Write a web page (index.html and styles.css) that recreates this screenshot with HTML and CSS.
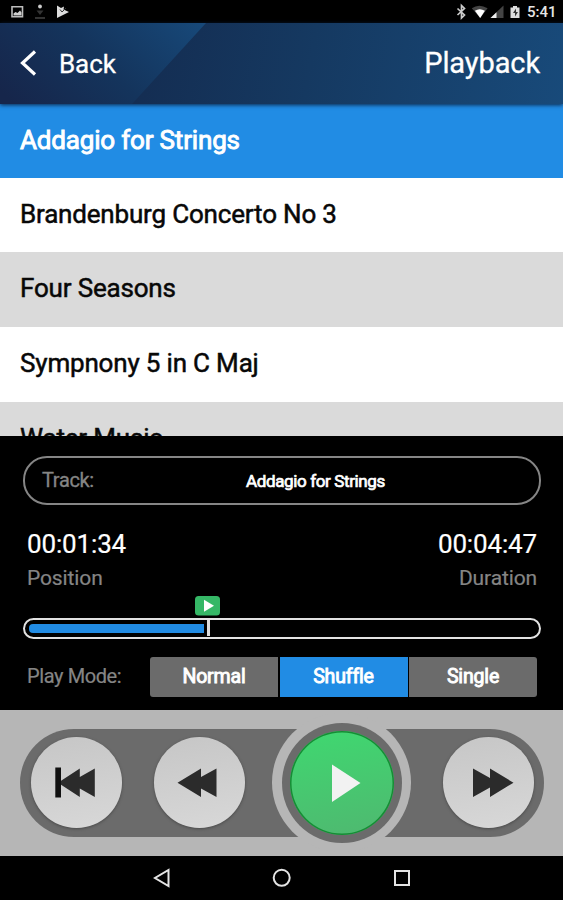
FILE: index.html
```html
<!DOCTYPE html>
<html lang="en">
<head>
<meta charset="utf-8">
<title>Playback</title>
<link rel="stylesheet" href="styles.css">
</head>
<body>
<div class="status">
  <svg class="status-left" width="80" height="23" viewBox="0 0 80 23">
    <path d="M12 6.800h10.500v10h-10.500z" fill="none" stroke="#bdbdbd" stroke-width="1.600"/>
    <path d="M13.500 15.500v-2l2-1.500 2 1 2.500-2.500 1.500 2v3z" fill="#d0d0d0"/>
    <circle cx="40" cy="6.500" r="1.900" fill="#ccc"/>
    <path d="M36.500 10.500h7L40 15zM35 17h10v2H35z" fill="#333"/>
    <path d="M57 5.500l4 2.500 3-1.500-.5 3 5.500 2.500-12 6z" fill="#ddd"/>
    <path d="M60 9.500l2 2.500 4-4" fill="none" stroke="#333" stroke-width="1"/>
  </svg>
  <div class="status-right">
    <svg width="70" height="23" viewBox="0 0 70 23">
      <path d="M2.500 8.500l7 6.500-3 3V5.500l3 3-7 6.500" fill="none" stroke="#ccc" stroke-width="1.700"/>
      <path d="M16.800 8.200q7.200-5 15.800 0L25.200 18z" fill="#444"/>
      <path d="M19.900 10.800q4.700-3 10 0L25.200 18z" fill="#fff"/>
      <path d="M48.500 5.500V18H35.500z" fill="#444"/>
      <path d="M41.500 12.300V18h-6z" fill="#eee"/>
      <path d="M55.500 7.500h2.500v-1.500h4v1.500h2.500V18h-9z" fill="#ddd"/>
      <path d="M61 8.500l-3 4.500h2v3.500l3-4.500h-2z" fill="#333"/>
    </svg>
    <span class="clock">5:41</span>
  </div>
</div>
<header class="header">
  <div class="back">
    <svg width="20" height="30" viewBox="0 0 20 30"><path d="M17 3.500L4.500 15l12.500 11.500" fill="none" stroke="#fff" stroke-width="3.200"/></svg>
    <span class="back-label">Back</span>
  </div>
  <span class="title">Playback</span>
</header>
<main class="tracks">
  <div class="track selected"><span>Addagio for Strings</span></div>
  <div class="track"><span>Brandenburg Concerto No 3</span></div>
  <div class="track alt"><span>Four Seasons</span></div>
  <div class="track"><span>Sympnony 5 in C Maj</span></div>
  <div class="track alt"><span>Water Music</span></div>
</main>
<section class="player">
  <div class="now">
    <span class="now-label">Track:</span>
    <span class="now-name">Addagio for Strings</span>
  </div>
  <div class="times">
    <div><div class="time">00:01:34</div><div class="caption">Position</div></div>
    <div class="right"><div class="time">00:04:47</div><div class="caption">Duration</div></div>
  </div>
  <div class="progress">
    <svg class="marker" width="25" height="20" viewBox="0 0 25 20"><rect width="25" height="19.500" rx="3.500" fill="#35b766"/><path d="M9 3.800L19 9.800 9 15.800z" fill="#fff"/></svg>
    <div class="bar"><div class="fill"></div><div class="tick"></div></div>
  </div>
  <div class="modes">
    <span class="mode-label">Play Mode:</span>
    <div class="mode first"><span>Normal</span></div>
    <div class="mode active"><span>Shuffle</span></div>
    <div class="mode last"><span>Single</span></div>
  </div>
</section>
<section class="controls">
  <div class="deck">
    <div class="btn">
      <svg width="91" height="91" viewBox="0 0 91 91"><path d="M48.800 31.500v8.500L63.800 31.500v28.500L48.800 51.500v8.500L27 45.700z" fill="#2b2b2b"/><path d="M24.300 30.500h5.700v30h-5.700z" fill="#111"/></svg>
    </div>
    <div class="btn rewind">
      <svg width="91" height="91" viewBox="0 0 91 91"><path d="M47 31.500v8.500L62.500 31.500v28.500L47 51.500v8.500L23.500 45.700z" fill="#2b2b2b"/></svg>
    </div>
    <div class="play-halo"><div class="play-ring"><div class="play">
      <svg width="104" height="104" viewBox="0 0 104 104"><path d="M42 33.500L70.500 52 42 71z" fill="#f2f2f2"/></svg>
    </div></div></div>
    <div class="btn forward">
      <svg width="91" height="91" viewBox="0 0 91 91"><path d="M30 31.500v28.500L47 50.500v9.500L70.500 45.700 47 31.500v9.500z" fill="#2b2b2b"/></svg>
    </div>
  </div>
</section>
<nav class="nav">
  <svg width="563" height="44" viewBox="0 0 563 44" fill="none" stroke="#e4e4e4" stroke-width="2">
    <path d="M168.500 14v16L155 22z"/><circle cx="281.700" cy="21.800" r="8"/><path d="M395 15h14v14h-14z"/>
  </svg>
</nav>
</body>
</html>
```
FILE: styles.css
```css
* { box-sizing: border-box; }
body { margin: 0; width: 563px; height: 900px; overflow: hidden; background: #000; font-family: Roboto, sans-serif; color: #fff; }
svg { display: block; }
span { white-space: nowrap; }
.status { height: 23px; display: flex; justify-content: space-between; background: #000; }
.status-right { display: flex; padding-right: 8px; }
.clock { font-size: 15px; line-height: 25px; font-weight: 500; width: 28px; margin-left: 2px; color: #e6e6e6; }
.header {
  height: 81px; display: flex; justify-content: space-between; padding: 0 23px 0 18px; line-height: 79px;
  background: linear-gradient(100deg, #142d52 25%, #153961 55%, #184a7a 100%);
  position: relative; z-index: 1; box-shadow: 0 1px 4px #0b2547;
}
.header::before {
  content: ""; position: absolute; inset: 0; z-index: -1;
  clip-path: polygon(0 0, 206px 0, 132px 100%, 0 100%);
  background: linear-gradient(45deg, #16264b 5%, #14345c 50%, #17497a 100%);
  width: 206px;
}
.back { display: flex; align-items: center; gap: 21px; }
.back svg { margin-top: -2px; }
.back-label { font-size: 26px; letter-spacing: -.1px; -webkit-text-stroke: .3px #fff; padding-top: 1px; }
.title { font-size: 29px; letter-spacing: -.1px; padding-top: 1px; -webkit-text-stroke: .3px #fff; }
.tracks { height: 332px; overflow: hidden; background: #fff; color: #080808; }
.track { height: 74.700px; padding-left: 20px; font-size: 26px; letter-spacing: -.18px; line-height: 73px; background: #fff; -webkit-text-stroke: .5px currentColor; }
.track.selected { height: 73.600px; line-height: 72px; background: #218ce4; color: #fff; -webkit-text-stroke-width: .9px; }
.track.alt { background: #dadada; }
.player { height: 274px; padding: 20px 22px 0 23px; background: #000; }
.now { display: flex; align-items: center; height: 48.500px; border: 2px solid #858585; border-radius: 24px; padding-left: 17px; }
.now-label { font-size: 20px; letter-spacing: -.35px; color: #858585; width: 204px; -webkit-text-stroke: .3px #858585; }
.now-name { font-size: 17px; letter-spacing: -.37px; -webkit-text-stroke: .7px #fff; padding-top: 2px; }
.times { display: flex; justify-content: space-between; padding: 23px 4px 0; }
.right { text-align: right; }
.time { font-size: 26px; letter-spacing: -.15px; line-height: 32px; -webkit-text-stroke: .2px #fff; }
.caption { font-size: 21px; letter-spacing: -.12px; line-height: 24px; margin-top: 6px; color: #858585; -webkit-text-stroke: .2px #858585; }
.progress { padding-top: 6.500px; }
.marker { margin-left: 172px; }
.bar { height: 20.500px; margin-top: 2px; border: 2.500px solid #e2e2e2; border-radius: 10.500px; display: flex; align-items: center; padding-left: 4px; }
.fill { width: 175px; height: 9px; background: #218ce4; border-radius: 4px 0 0 4px; }
.tick { width: 2.500px; height: 16px; margin-left: 3px; background: #ddd; }
.modes { display: flex; height: 40px; margin-top: 18px; padding-left: 4px; line-height: 39px; }
.mode-label { width: 123px; font-size: 20px; letter-spacing: -.4px; color: #858585; -webkit-text-stroke: .2px #858585; }
.mode { width: 128px; margin-right: 1.500px; background: #6b6b6b; text-align: center; font-size: 19.500px; letter-spacing: -.15px; -webkit-text-stroke: .9px #fff; }
.mode.active { background: #218ce4; }
.first { border-radius: 3px 0 0 3px; }
.last { border-radius: 0 3px 3px 0; }
.controls { height: 146px; background: #b6b6b6; padding: 18.500px 19px 0 20px; }
.deck { height: 108.500px; background: #6b6b6b; border-radius: 55px; display: flex; align-items: center; padding-left: 10.500px; }
.btn { width: 91px; height: 91px; flex: none; border-radius: 50%; background: linear-gradient(170deg, #c6c6c6, #d8d8d8); box-shadow: 0 1px 3px #4a4a4a; }
.rewind { margin-left: 32.500px; }
.play-halo { width: 139px; height: 139px; flex: none; margin-left: 27px; border-radius: 50%; background: #b6b6b6; display: grid; place-items: center; }
.play-ring { width: 120px; height: 120px; border-radius: 50%; background: #6b6b6b; display: grid; place-items: center; }
.play { width: 104px; height: 104px; border-radius: 50%; background: linear-gradient(170deg, #3fd870, #4fb870); box-shadow: inset 0 0 0 1.500px #168c35; }
.forward { margin-left: 32px; }
.nav { height: 44px; background: #000; }
```
